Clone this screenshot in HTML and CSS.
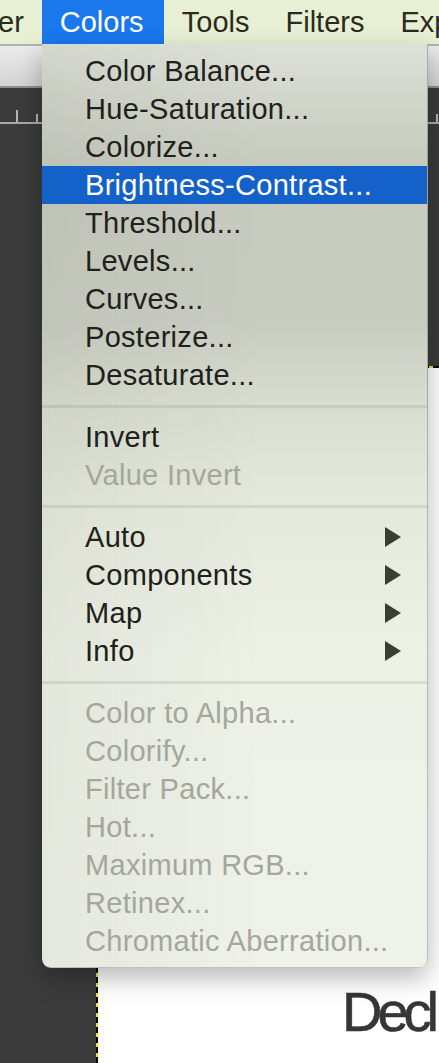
FILE: index.html
```html
<!DOCTYPE html>
<html lang="en">
<head>
<meta charset="utf-8">
<title>Colors menu</title>
<link rel="stylesheet" href="styles.css">
</head>
<body>
<div class="screen">
  <nav class="menubar">
    <span class="mb-item mb-first">er</span>
    <span class="mb-item mb-active">Colors</span>
    <span class="mb-item">Tools</span>
    <span class="mb-item">Filters</span>
    <span class="mb-item">Exp</span>
  </nav>
  <div class="workspace">
    <div class="toolbar"></div>
    <div class="ruler"></div>
    <div class="gap"></div>
    <div class="canvas-row">
      <div class="canvas">
        <div class="canvas-text">Decl</div>
      </div>
    </div>
  </div>

  <div class="menu">
    <div class="mi">Color Balance...</div>
    <div class="mi">Hue-Saturation...</div>
    <div class="mi">Colorize...</div>
    <div class="mi mi-hl">Brightness-Contrast...</div>
    <div class="mi">Threshold...</div>
    <div class="mi">Levels...</div>
    <div class="mi">Curves...</div>
    <div class="mi">Posterize...</div>
    <div class="mi">Desaturate...</div>
    <div class="sep"></div>
    <div class="mi">Invert</div>
    <div class="mi mi-dis">Value Invert</div>
    <div class="sep"></div>
    <div class="mi">Auto<span class="arrow"></span></div>
    <div class="mi">Components<span class="arrow"></span></div>
    <div class="mi">Map<span class="arrow"></span></div>
    <div class="mi">Info<span class="arrow"></span></div>
    <div class="sep"></div>
    <div class="mi mi-dis">Color to Alpha...</div>
    <div class="mi mi-dis">Colorify...</div>
    <div class="mi mi-dis">Filter Pack...</div>
    <div class="mi mi-dis">Hot...</div>
    <div class="mi mi-dis">Maximum RGB...</div>
    <div class="mi mi-dis">Retinex...</div>
    <div class="mi mi-dis">Chromatic Aberration...</div>
  </div>
</div>
</body>
</html>
```
FILE: styles.css
```css
* { box-sizing: border-box; }
html, body { margin: 0; padding: 0; }
body {
  width: 439px;
  height: 1063px;
  overflow: hidden;
  font-family: "Liberation Sans", Arial, sans-serif;
}
.screen {
  position: relative;
  width: 439px;
  height: 1063px;
  overflow: hidden;
  background: #3b3b3b;
  display: flex;
  flex-direction: column;
}

/* menubar */
.menubar {
  height: 44px;
  flex: none;
  display: flex;
  background: #e7efd4;
  white-space: nowrap;
}
.mb-item {
  display: block;
  height: 44px;
  line-height: 44px;
  font-size: 29px;
  color: #2b2b1c;
  padding: 0 18px 0 18px;
  flex: none;
}
.mb-first {
  margin-left: -2px;
  padding: 0 18px 0 0;
}
.mb-active {
  background: #1a77ec;
  color: #ffffff;
  width: 122px;
  padding-left: 18px;
}

/* workspace behind the menu */
.workspace {
  flex: 1;
  display: flex;
  flex-direction: column;
}
.toolbar {
  height: 44px;
  flex: none;
  border-top: 2px solid #b3b3b3;
  border-bottom: 2px solid #8e8e8e;
  background: linear-gradient(#ebebeb, #d3d3d3);
}
.ruler {
  height: 36px;
  flex: none;
  border-bottom: 2px solid #a9a9a9;
  background:
    linear-gradient(#b4b4b4, #b4b4b4) 16px 22px / 2px 12px no-repeat,
    linear-gradient(#b4b4b4, #b4b4b4) 36px 26px / 2px 8px no-repeat,
    linear-gradient(#b4b4b4, #b4b4b4) 436px 26px / 2px 8px no-repeat,
    #3b3b3b;
}
.gap {
  height: 242px;
  flex: none;
}
.canvas-row {
  flex: 1;
  display: flex;
  padding-left: 96px;
}
.canvas {
  flex: 1;
  border-top: 2px dashed #000;
  border-left: 2px dashed #000;
  background: linear-gradient(#ffffff, #ffffff) padding-box, #f4e600 border-box;
  overflow: hidden;
  padding: 611px 0 0 244px;
}
.canvas-text {
  font-family: "Liberation Sans", Arial, sans-serif;
  font-size: 56px;
  letter-spacing: -5px;
  color: #363636;
  white-space: nowrap;
  -webkit-text-stroke: 0.6px #363636;
}

/* dropdown menu (overlay) */
.menu {
  position: absolute;
  left: 42px;
  top: 44px;
  width: 386px;
  height: 924px;
  padding: 8px 0;
  border-radius: 0 0 9px 9px;
  border-right: 1px solid rgba(0, 0, 0, 0.18);
  border-bottom: 1px solid rgba(0, 0, 0, 0.12);
  box-shadow: 0 10px 26px rgba(0, 0, 0, 0.28);
  background:
    linear-gradient(to right, rgba(40, 45, 30, 0.05), rgba(40, 45, 30, 0) 220px),
    linear-gradient(#dee1d8 0px, #d3d7cc 44px, #c7cbbf 120px, #c9cdc1 280px, #d8ddd0 360px, #e6eadd 460px, #edf1e6 620px, #eff2e8 924px);
}
.mi {
  height: 38px;
  line-height: 38px;
  padding-left: 43px;
  padding-right: 26px;
  font-size: 29px;
  letter-spacing: 0.3px;
  color: #20211a;
  white-space: nowrap;
  display: flex;
  align-items: center;
}
.mi-hl {
  background: #1462c9;
  color: #ffffff;
}
.mi-dis {
  color: #a3a79c;
}
.arrow {
  margin-left: auto;
  width: 0;
  height: 0;
  border-top: 10px solid transparent;
  border-bottom: 10px solid transparent;
  border-left: 16px solid #3b3e33;
}
.sep {
  height: 24px;
  padding-top: 11px;
}
.sep::before {
  content: "";
  display: block;
  height: 3px;
  background: rgba(110, 120, 95, 0.16);
}
```
